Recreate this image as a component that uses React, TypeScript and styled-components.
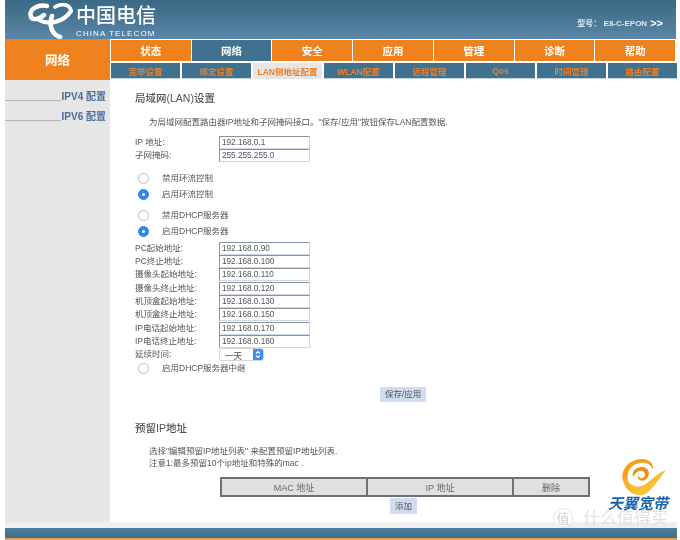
import React from "react";
import styled, { createGlobalStyle } from "styled-components";

const Global = createGlobalStyle`
  html, body { margin: 0; padding: 0; background: #fff; }
  body { font-family: "Liberation Sans", "Noto Sans CJK SC", sans-serif; }
`;
const Page = styled.div`
  position: relative; width: 680px; height: 540px; overflow: hidden; background: #fff;
  display: flex; flex-direction: column; padding: 0 3px 0 5px; box-sizing: border-box;
  filter: blur(0.35px);
`;
const Header = styled.header`
  height: 39px; flex: none; display: flex; align-items: flex-start; justify-content: space-between;
  background: linear-gradient(#3c6a86, #45738f 35%, #5a86a8);
  color: #fff; padding-left: 23px; box-sizing: border-box; margin-right: 1px;
`;
const Brand = styled.div` display: flex; gap: 2px; margin-top: 3px; `;
const BrandText = styled.div` display: flex; flex-direction: column; padding-top: 2px; `;
const BrandCn = styled.div` font-size: 20px; line-height: 23px; font-weight: 500; height: 24px; `;
const BrandEn = styled.div` font-size: 8px; line-height: 9px; letter-spacing: 1.1px; white-space: nowrap; `;
const Model = styled.div` margin: 18px 13px 0 0; font-size: 8px; line-height: 11px; font-weight: 700; color: #dfe9f0; display: flex; align-items: center; gap: 3px; `;
const Arrows = styled.span` font-size: 11px; color: #fff; `;
const NavRow = styled.div` display: flex; flex: none; height: 41px; `;
const Section = styled.div`
  width: 105px; flex: none; background: #f0821e; color: #fff; font-size: 12.5px; font-weight: 700;
  display: flex; align-items: center; justify-content: center; box-sizing: border-box;
`;
const Tabs = styled.div` flex: 1; display: flex; flex-direction: column; padding: 1px 0 0 1px; `;
const MainTabs = styled.div` display: grid; grid-template-columns: repeat(7, 1fr); gap: 1px; height: 21px; margin-right: 2px; `;
const MainTab = styled.div<{ $active?: boolean }>`
  background: ${p => (p.$active ? "#40718f" : "#f0821e")}; color: #fff; font-size: 10.5px; font-weight: 700;
  display: flex; align-items: center; justify-content: center;
`;
const SubTabs = styled.div` display: grid; grid-template-columns: repeat(8, 1fr); gap: 2px; height: 16px; margin-top: 2px; `;
const SubTab = styled.div<{ $active?: boolean }>`
  background: ${p => (p.$active ? "#e6e6e6" : "#40718f")}; color: #ee7f26; font-size: 8.5px; font-weight: 700;
  display: flex; align-items: center; justify-content: center; border-bottom: 1px solid ${p => (p.$active ? "#e6e6e6" : "#c5d5e0")}; box-sizing: border-box; white-space: nowrap;
`;
const Body = styled.div` flex: 1; display: flex; min-height: 0; `;
const Sidebar = styled.aside` width: 105px; flex: none; background: #e6e6e6; padding-top: 1px; box-sizing: border-box; `;
const SideItem = styled.div`
  height: 20px; box-sizing: border-box; text-align: right; padding: 9px 4px 0 0;
  background: linear-gradient(#b5b5b5, #b5b5b5) no-repeat left bottom / 56px 1px;
  color: #4a6a9a; font-size: 10px; font-weight: 700; line-height: 14px;
`;
const Content = styled.main` flex: 1; padding: 11px 0 0 25px; box-sizing: border-box; color: #555; font-size: 8.5px; `;
const Title = styled.h2` margin: 0; font-size: 10.5px; line-height: 14px; font-weight: 500; color: #555; `;
const Intro = styled.p` margin: 11px 0 8px; padding-left: 14px; line-height: 12px; font-size: 8.5px; `;
const Note = styled.p` margin: 0; padding-left: 14px; line-height: 12px; font-size: 8.5px; `;
const FieldGrid = styled.div` display: grid; grid-template-columns: 84px 91px; grid-auto-rows: 13.3px; align-items: center; `;
const FieldLabel = styled.label` font-size: 8.5px; line-height: 13px; `;
const TextBox = styled.div`
  height: 13px; box-sizing: border-box; background: #fff; border: 1px solid #c9d9ea; border-top-color: #8a90a0; border-left-color: #8a90a0;
  font-size: 8.2px; line-height: 11px; padding-left: 2px; color: #555;
`;
const RadioRow = styled.label` display: flex; align-items: flex-start; height: 16px; line-height: 14px; padding-left: 3px; font-size: 8.5px; `;
const Radio = styled.span<{ $on?: boolean }>`
  width: 11px; height: 11px; border-radius: 50%; box-sizing: border-box; margin: 2px 13px 0 0; flex: none; position: relative;
  background: ${p => (p.$on ? "#2f86f0" : "#fff")}; border: 1px solid ${p => (p.$on ? "#2f86f0" : "#bbb")};
  &::after { content: ""; display: ${p => (p.$on ? "block" : "none")}; position: absolute; left: 3px; top: 3px; width: 3px; height: 3px; border-radius: 50%; background: #fff; }
`;
const RadioGroup = styled.div<{ $top: number }>` margin-top: ${p => p.$top}px; `;
const RadioEnd = styled.div` margin-bottom: 2px; `;
const SelectBox = styled.div`
  width: 45px; height: 13px; box-sizing: border-box; border-radius: 3px; border: 1px solid #d5d5d5; background: #fff; display: flex; align-items: center;
  justify-content: space-between; padding-left: 5px; font-size: 8.5px; overflow: hidden; color: #444;
`;
const SelectCap = styled.span` width: 10px; height: 13px; background: #3b8ef0; display: flex; align-items: center; justify-content: center; `;
const ButtonRow = styled.div` display: flex; padding-left: 245px; margin-top: 10px; `;
const Btn = styled.button`
  height: 15px; padding: 0 5px; border: 0; background: #cfdcf2; color: #555; font-family: inherit; font-size: 8.5px; line-height: 15px; white-space: nowrap;
`;
const Second = styled(Title)` margin: 19px 0 10px; `;
const MacTable = styled.table`
  margin: 8px 0 0 85px; width: 368px; height: 20px; border-collapse: collapse; table-layout: fixed;
  th { border: 2px solid #6f6f6f; background: #e0e0e0; color: #666; font-weight: 400; font-size: 9px; padding: 0; }
`;
const AddRow = styled.div` display: flex; padding-left: 255px; margin-top: 1px; `;
const AddBtn = styled(Btn)` height: 16px; `;
const FooterGap = styled.div` height: 6px; flex: none; background: #efefef; `;
const FooterBar = styled.footer`
  height: 10px; flex: none; background: linear-gradient(#4e7e9e, #3e6e8e); border-bottom: 2px solid #e8a050;
`;
const Product = styled.div` position: absolute; left: 606px; top: 459px; width: 64px; display: flex; flex-direction: column; align-items: center; `;
const ProductLogo = styled.div` margin-left: 10px; height: 38px; `;
const ProductText = styled.div` font-size: 15px; line-height: 14px; font-weight: 700; font-style: italic; color: #1b63a8; white-space: nowrap; `;
const Watermark = styled.div` position: absolute; left: 553px; top: 508px; display: flex; align-items: center; gap: 10px; color: rgba(222,222,222,.9); font-size: 17px; line-height: 15px; white-space: nowrap; `;
const WaterBadge = styled.span` width: 20px; height: 20px; border-radius: 50%; background: rgba(255,255,255,.9); border: 1px solid #e6e6e6; box-sizing: border-box; color: #d0d0d0; display: flex; align-items: center; justify-content: center; font-size: 13px; `;

const TelecomLogo = () => (
  <svg width="46" height="36" viewBox="0 0 46 36" fill="none" stroke="#fff" strokeLinecap="round">
    <path d="M19 3 C10 1 2 6 2.5 12 C3 18 10 17 16 12" strokeWidth="4.4" />
    <path d="M11 17 C20 22 35 20 43 8" strokeWidth="4.2" />
    <path d="M27 4 C33 0 42 1 43 8" strokeWidth="3.6" />
    <path d="M24 13 C21 22 23 31 32 34" strokeWidth="4.6" />
  </svg>
);
const BroadbandLogo = () => (
  <svg width="46" height="38" viewBox="0 0 46 38">
    <defs>
      <linearGradient id="bbSwoosh" x1="0" y1="0" x2="1" y2="1">
        <stop offset="0" stopColor="#f4a11a" />
        <stop offset="1" stopColor="#fbd34a" />
      </linearGradient>
    </defs>
    <path d="M3 22 C0 10 10 0 22 0 C30 0 34 5 33 11 C31 5 26 3 20 4 C11 5 6 13 8 22 Z" fill="#f3a01b" />
    <path d="M3 20 C4 30 12 37 22 36 C30 35 36 24 46 11 C38 14 32 20 26 25 C18 30 8 28 6 16 Z" fill="url(#bbSwoosh)" />
    <path d="M13 18 C11 10 20 6 26 9 C30 12 30 18 25 21 C21 23 17 20 18 16 C19 20 23 20 25 17 C26 13 22 11 19 12 C16 13 15 15 13 18 Z" fill="#ee8f17" />
  </svg>
);
const Chevrons = () => (
  <svg width="6" height="9" viewBox="0 0 6 9" fill="none" stroke="#fff" strokeWidth="1.2"><path d="M1 3.5 L3 1.5 L5 3.5 M1 5.5 L3 7.5 L5 5.5" /></svg>
);

const main = ["状态", "网络", "安全", "应用", "管理", "诊断", "帮助"];
const sub = ["宽带设置", "绑定设置", "LAN侧地址配置", "WLAN配置", "远程管理", "Qos", "时间管理", "路由配置"];
const ranges: [string, string][] = [
  ["PC起始地址:", "192.168.0.90"], ["PC终止地址:", "192.168.0.100"],
  ["摄像头起始地址:", "192.168.0.110"], ["摄像头终止地址:", "192.168.0.120"],
  ["机顶盒起始地址:", "192.168.0.130"], ["机顶盒终止地址:", "192.168.0.150"],
  ["IP电话起始地址:", "192.168.0.170"], ["IP电话终止地址:", "192.168.0.180"],
];

export default function App() {
  return (
    <Page>
      <Global />
      <Header>
        <Brand>
          <TelecomLogo />
          <BrandText>
            <BrandCn>中国电信</BrandCn>
            <BrandEn>CHINA TELECOM</BrandEn>
          </BrandText>
        </Brand>
        <Model>型号： E8-C-EPON <Arrows>&gt;&gt;</Arrows></Model>
      </Header>
      <NavRow>
        <Section>网络</Section>
        <Tabs>
          <MainTabs>{main.map(t => <MainTab key={t} $active={t === "网络"}>{t}</MainTab>)}</MainTabs>
          <SubTabs>{sub.map(t => <SubTab key={t} $active={t.startsWith("LAN")}>{t}</SubTab>)}</SubTabs>
        </Tabs>
      </NavRow>
      <Body>
        <Sidebar>
          <SideItem>IPV4 配置</SideItem>
          <SideItem>IPV6 配置</SideItem>
        </Sidebar>
        <Content>
          <Title>局域网(LAN)设置</Title>
          <Intro>为局域网配置路由器IP地址和子网掩码接口。"保存/应用"按钮保存LAN配置数据.</Intro>
          <FieldGrid>
            <FieldLabel>IP 地址:</FieldLabel><TextBox>192.168.0.1</TextBox>
            <FieldLabel>子网掩码:</FieldLabel><TextBox>255.255.255.0</TextBox>
          </FieldGrid>
          <RadioGroup $top={8}>
            <RadioRow><Radio />禁用环流控制</RadioRow>
            <RadioRow><Radio $on />启用环流控制</RadioRow>
          </RadioGroup>
          <RadioGroup $top={5}>
            <RadioRow><Radio />禁用DHCP服务器</RadioRow>
            <RadioRow><Radio $on />启用DHCP服务器</RadioRow>
          </RadioGroup>
          <RadioEnd />
          <FieldGrid>
            {ranges.map(([l, v]) => (
              <React.Fragment key={l}><FieldLabel>{l}</FieldLabel><TextBox>{v}</TextBox></React.Fragment>
            ))}
            <FieldLabel>延续时间:</FieldLabel>
            <SelectBox>一天<SelectCap><Chevrons /></SelectCap></SelectBox>
          </FieldGrid>
          <RadioRow><Radio />启用DHCP服务器中继</RadioRow>
          <ButtonRow><Btn>保存/应用</Btn></ButtonRow>
          <Second>预留IP地址</Second>
          <Note>选择"编辑预留IP地址列表" 来配置预留IP地址列表.</Note>
          <Note>注意1:最多预留10个ip地址和特殊的mac .</Note>
          <MacTable>
            <colgroup><col style={{ width: 146 }} /><col style={{ width: 146 }} /><col style={{ width: 76 }} /></colgroup>
            <thead><tr><th>MAC 地址</th><th>IP 地址</th><th>删除</th></tr></thead>
          </MacTable>
          <AddRow><AddBtn>添加</AddBtn></AddRow>
        </Content>
      </Body>
      <FooterGap />
      <FooterBar />
      <Product>
        <ProductLogo><BroadbandLogo /></ProductLogo>
        <ProductText>天翼宽带</ProductText>
      </Product>
      <Watermark><WaterBadge>值</WaterBadge>什么值得买</Watermark>
    </Page>
  );
}
